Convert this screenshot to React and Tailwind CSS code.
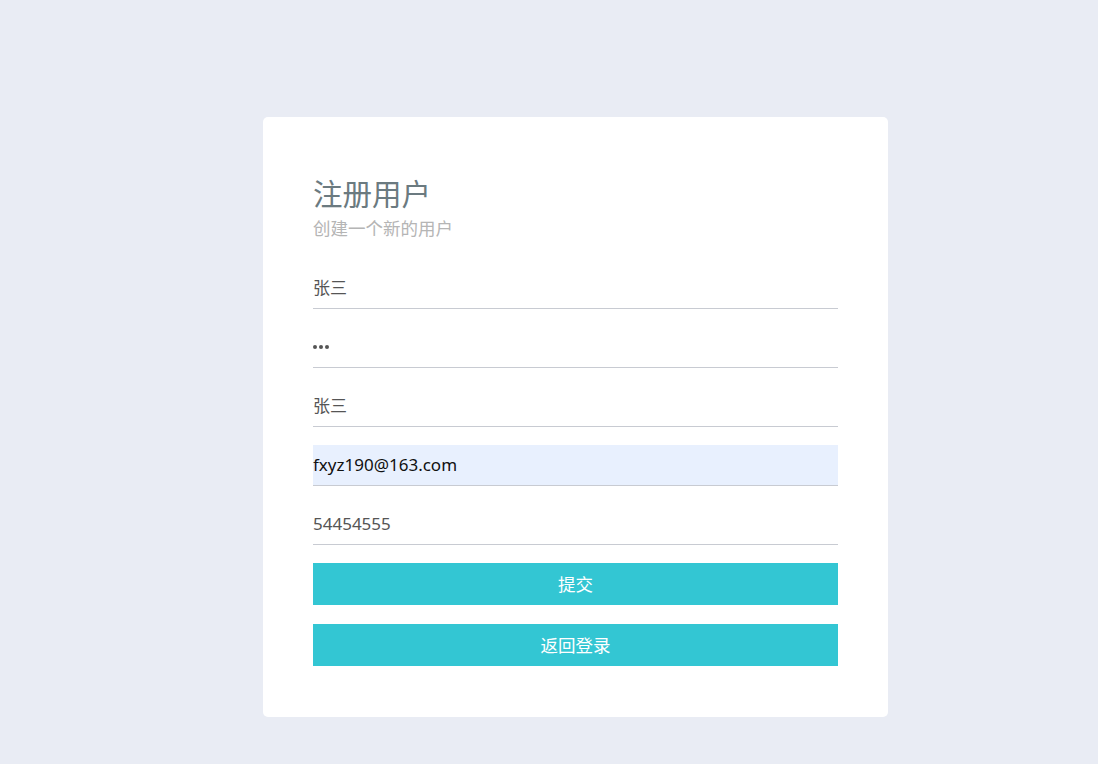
import React from 'react'

const fields = [
  { value: '张三', type: 'text' },
  { value: '•••', type: 'dots' },
  { value: '张三', type: 'text' },
  { value: 'fxyz190@163.com', type: 'autofill' },
  { value: '54454555', type: 'text' },
]

const App = () => {
  return (
    <div
      className="min-h-screen bg-[#e9ecf4] pt-[117px] pl-[263px]"
      style={{ fontFamily: '"Noto Sans", "Noto Sans CJK SC", sans-serif' }}
    >
      <div className="w-[625px] h-[600px] bg-white rounded-[5px] px-[50px] pt-[58px]">
        <h1 className="text-[29.5px] leading-[38px] text-[#6b7a80]">注册用户</h1>
        <p className="text-[17.5px] leading-[24px] text-[#b5b5b5] mt-[3px]">创建一个新的用户</p>

        <div className="mt-[28px] flex flex-col gap-[18px]">
          {fields.map((f, i) => (
            <div
              key={i}
              className={
                'h-[41px] border-b border-[#c8cbd2] flex items-center text-[17px] ' +
                (f.type === 'autofill' ? 'bg-[#e8f0fe] text-[#111]' : 'text-[#555]')
              }
            >
              {f.type === 'dots' ? (
                <span className="flex gap-[2px] items-center">
                  <span className="w-[4px] h-[4px] rounded-full bg-[#555]"></span>
                  <span className="w-[4px] h-[4px] rounded-full bg-[#555]"></span>
                  <span className="w-[4px] h-[4px] rounded-full bg-[#555]"></span>
                </span>
              ) : (
                f.value
              )}
            </div>
          ))}
        </div>

        <button className="mt-[18px] w-full h-[42px] bg-[#33c6d3] text-white text-[17.5px]">提交</button>
        <button className="mt-[19px] w-full h-[42px] bg-[#33c6d3] text-white text-[17.5px]">返回登录</button>
      </div>
    </div>
  )
}

export default App
